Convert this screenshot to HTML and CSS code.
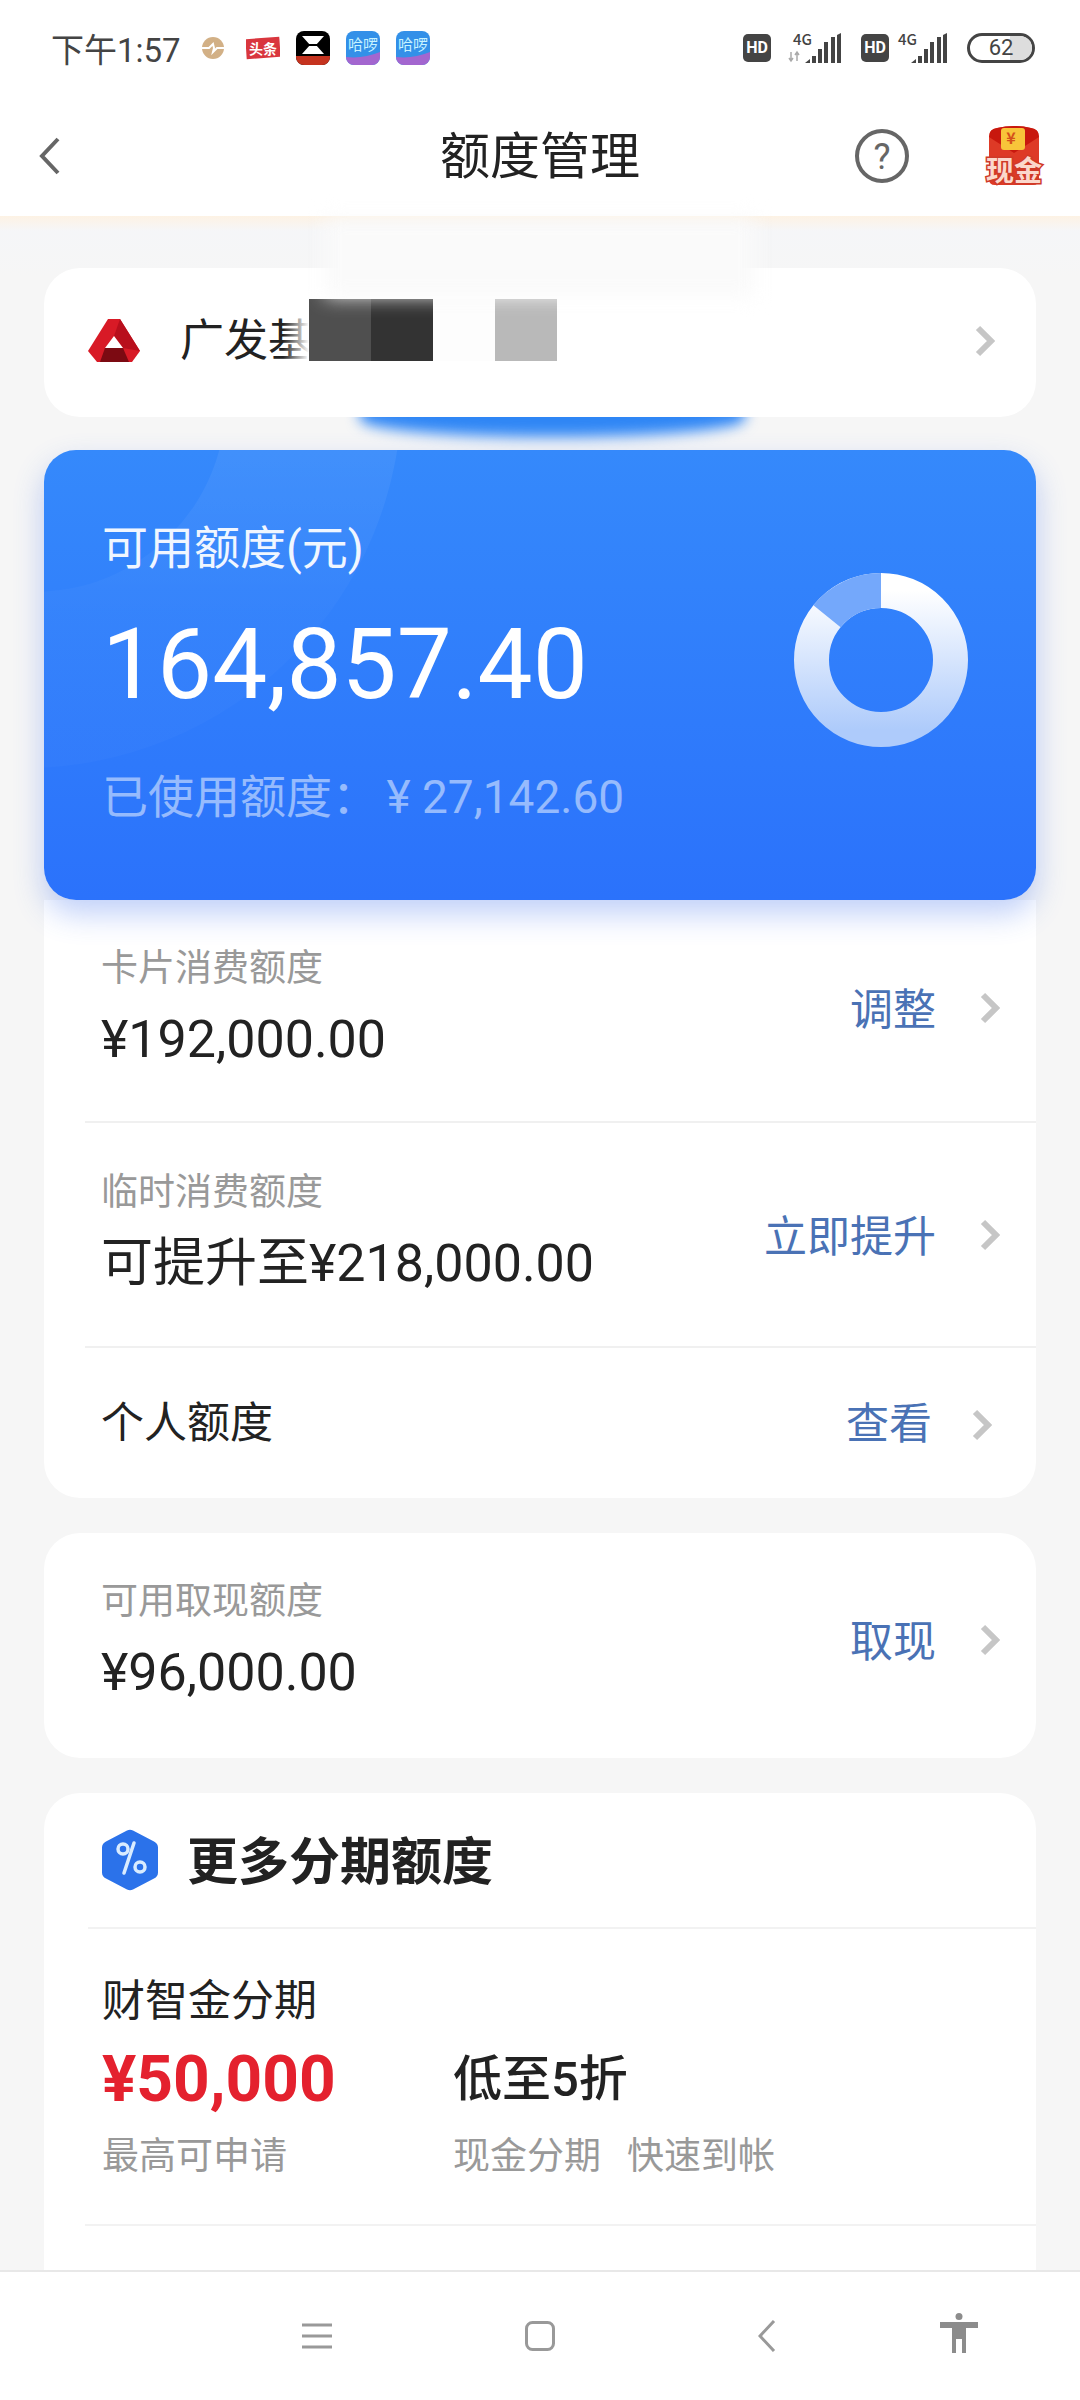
FILE: index.html

```html
<!DOCTYPE html>
<html>
<head>
  <meta charset="utf-8">
  <title>额度管理</title>
  <link rel="stylesheet" href="styles.css">
</head>
<body>
  <div class="screen">
    <div class="status-bar">
      <div class="status-left">
        <span class="time">下午1:57</span>
        <svg class="app-icon coin-icon" viewBox="0 0 34 34"><circle cx="17" cy="17" r="11" fill="#d2b086"/><path d="M6 17h7l4-4 1 4-1 4 4-4h7" stroke="#fff" stroke-width="2" fill="none"/></svg>
        <svg class="app-icon" viewBox="0 0 34 34"><rect x="0" y="7" width="34" height="20" fill="#d9363e" transform="rotate(-4 17 17)"/><text class="tiny-text" x="17" y="23" font-size="14" font-weight="700" fill="#fff" text-anchor="middle">头条</text></svg>
        <svg class="app-icon" viewBox="0 0 34 34"><rect width="34" height="34" rx="8" fill="#000"/><path d="M0 25h34v1a8 8 0 0 1-8 8H8a8 8 0 0 1-8-8z" fill="#c5331f"/><path d="M6 5h22l-8 9 8 9H6l8-9z" fill="#fff"/><path d="M9 13h16v2H9z" fill="#000"/></svg>
        <svg class="app-icon" viewBox="0 0 34 34"><rect width="34" height="34" rx="8" fill="#3390e8"/><path d="M0 26q17 2 34-5v5a8 8 0 0 1-8 8H8a8 8 0 0 1-8-8z" fill="#a366cf"/><text class="tiny-text" x="17" y="19" font-size="15" fill="#c8f3ff" text-anchor="middle">哈啰</text></svg>
        <svg class="app-icon" viewBox="0 0 34 34"><rect width="34" height="34" rx="8" fill="#3390e8"/><path d="M0 26q17 2 34-5v5a8 8 0 0 1-8 8H8a8 8 0 0 1-8-8z" fill="#a366cf"/><text class="tiny-text" x="17" y="19" font-size="15" fill="#c8f3ff" text-anchor="middle">哈啰</text></svg>
      </div>
      <div class="status-right">
        <span class="hd">HD</span>
        <svg class="signal signal-a" width="57" height="32" viewBox="0 0 57 32">
          <text class="tiny-text" x="5" y="13" font-size="15" font-weight="500" fill="#444">4G</text>
          <path d="M3 20v9M1 26l2 3 2-3M9 29v-9M7 23l2-3 2 3" stroke="#aaa" stroke-width="1.5" fill="none"/>
          <path d="M17 31l5-4v4zM24 24h4v7h-4zM30 17h4v14h-4zM36 10h4v21h-4zM43 5h4v26h-4zM53 1v30h-4V3z" fill="#444"/>
        </svg>
        <span class="hd">HD</span>
        <svg class="signal signal-b" width="53" height="32" viewBox="0 0 53 32">
          <text class="tiny-text" x="0" y="13" font-size="15" font-weight="500" fill="#444">4G</text>
          <path d="M13 31l5-4v4zM20 24h4v7h-4zM26 17h4v14h-4zM32 10h4v21h-4zM39 5h4v26h-4zM49 1v30h-4V3z" fill="#444"/>
        </svg>
        <span class="battery"><span class="battery-level"></span><span class="battery-num">62</span></span>
      </div>
    </div>

    <div class="top-bar">
      <svg class="back-icon" width="22" height="38" viewBox="0 0 22 38"><polyline points="19,2 3,19 19,36" fill="none" stroke="#666" stroke-width="4"/></svg>
      <div class="page-title">额度管理</div>
      <svg class="help-icon" width="56" height="56" viewBox="0 0 56 56">
        <circle cx="28" cy="28" r="25" fill="none" stroke="#666" stroke-width="4"/>
        <text class="help-mark" x="28" y="41" font-size="36" fill="#666" text-anchor="middle">?</text>
      </svg>
      <svg class="cash-icon" width="60" height="62" viewBox="0 0 60 62">
        <path d="M5 12q0-8 8-9 17-4 34-0 8 1 8 9v42q0 6-6 6H11q-6 0-6-6z" fill="#de3a26"/>
        <path d="M5 12q0-8 8-9 17-4 34-0 8 1 8 9L30 28z" fill="#c8180e"/>
        <rect x="17" y="3" width="24" height="22" rx="3" fill="#f8c53a"/>
        <text class="tiny-text" x="27" y="19" font-size="16" font-weight="700" fill="#d5501a" text-anchor="middle">¥</text>
        <text class="cash-text" x="30" y="56" font-size="28" font-weight="700" text-anchor="middle">现金</text>
      </svg>
    </div>

    <div class="content">
      <div class="top-smudge"></div>
      <div class="bank-card">
        <svg class="bank-logo" width="52" height="43" viewBox="0 0 52 43">
          <polygon points="20,0 32,0 52,32 44,43 9,43 0,32" fill="#d81a26"/>
          <polygon points="26,17 32,0 52,32 35,29" fill="#b80f1c"/>
          <polygon points="17,29 35,29 41,43 12,43" fill="#7c0a12"/>
          <polygon points="26,17 35,29 17,29" fill="#fff"/>
        </svg>
        <span class="bank-name">广发基</span>
        <div class="mosaic">
          <span class="mosaic-a"></span>
          <span class="mosaic-b"></span>
          <span class="mosaic-c"></span>
          <span class="mosaic-d"></span>
        </div>
        <svg class="chev bank-chev" width="20" height="32" viewBox="0 0 20 32"><polyline points="3,3 16,16 3,29"/></svg>
      </div>
      <div class="bank-glow"></div>

      <div class="quota-card">
        <svg class="quota-arcs" width="992" height="450" viewBox="0 0 992 450">
          <defs>
            <linearGradient id="arcFade" x1="0" y1="0" x2="0" y2="1">
              <stop offset="0" stop-color="#fff" stop-opacity="0.17"/>
              <stop offset="0.8" stop-color="#fff" stop-opacity="0.02"/>
            </linearGradient>
          </defs>
          <path fill="url(#arcFade)" fill-rule="evenodd" d="M-398 -60a378 378 0 1 0 756 0a378 378 0 1 0 -756 0zM-202 -50a192 192 0 1 0 384 0a192 192 0 1 0 -384 0z"/>
        </svg>
        <div class="quota-text">
          <div class="quota-label">可用额度(元)</div>
          <div class="quota-value">164,857.40</div>
          <div class="quota-used">已使用额度： <span class="used-num">¥ 27,142.60</span></div>
        </div>
        <svg class="quota-ring" width="174" height="174" viewBox="0 0 174 174">
          <defs>
            <linearGradient id="ringFill" x1="0" y1="0" x2="0" y2="1">
              <stop offset="0" stop-color="#fff"/>
              <stop offset="1" stop-color="#aecbfb"/>
            </linearGradient>
          </defs>
          <circle cx="87" cy="87" r="69.5" fill="none" stroke="url(#ringFill)" stroke-width="35"/>
          <path d="M87 17.5a69.5 69.5 0 0 0-54 25.7" fill="none" stroke="#74a8fb" stroke-width="35"/>
        </svg>
      </div>

      <div class="list-card attached">
        <div class="row row-first">
          <div class="row-body">
            <div class="row-label">卡片消费额度</div>
            <div class="row-value">¥192,000.00</div>
          </div>
          <div class="row-action lift">
            <span>调整</span>
            <svg class="chev" width="20" height="32" viewBox="0 0 20 32"><polyline points="3,3 16,16 3,29"/></svg>
          </div>
        </div>
        <div class="row row-second">
          <div class="row-body">
            <div class="row-label">临时消费额度</div>
            <div class="row-value">可提升至¥218,000.00</div>
          </div>
          <div class="row-action">
            <span>立即提升</span>
            <svg class="chev" width="20" height="32" viewBox="0 0 20 32"><polyline points="3,3 16,16 3,29"/></svg>
          </div>
        </div>
        <div class="row row-last">
          <div class="row-title">个人额度</div>
          <div class="row-action row-action-alt">
            <span>查看</span>
            <svg class="chev" width="20" height="32" viewBox="0 0 20 32"><polyline points="3,3 16,16 3,29"/></svg>
          </div>
        </div>
      </div>

      <div class="list-card">
        <div class="row row-cash">
          <div class="row-body">
            <div class="row-label">可用取现额度</div>
            <div class="row-value">¥96,000.00</div>
          </div>
          <div class="row-action">
            <span>取现</span>
            <svg class="chev" width="20" height="32" viewBox="0 0 20 32"><polyline points="3,3 16,16 3,29"/></svg>
          </div>
        </div>
      </div>

      <div class="list-card more-card">
        <div class="more-head">
          <svg class="more-badge" width="56" height="62" viewBox="0 0 56 62">
            <path d="M25 1.5q3-1.500 6 0l21 11q4 2 4 6v25q0 4-4 6l-21 11q-3 1.500-6 0L4 49.500q-4-2-4-6v-25q0-4 4-6z" fill="#2b72ea"/>
            <circle cx="21" cy="20" r="5" fill="none" stroke="#d9ecff" stroke-width="3.500"/>
            <circle cx="38" cy="38" r="5" fill="none" stroke="#d9ecff" stroke-width="3.500"/>
            <path d="M32 14L22 44" stroke="#d9ecff" stroke-width="3.500" stroke-linecap="round"/>
          </svg>
          <span class="more-title">更多分期额度</span>
        </div>
        <div class="plan">
          <div class="plan-name">财智金分期</div>
          <div class="plan-grid">
            <div class="plan-amount">¥50,000</div>
            <div class="plan-rate">低至5折</div>
            <div class="plan-note">最高可申请</div>
            <div class="plan-note"><span class="note-gap">现金分期</span>快速到帐</div>
          </div>
        </div>
        <div class="plan-rest"></div>
      </div>
    </div>

    <div class="nav-bar">
      <svg class="nav-menu" width="30" height="26" viewBox="0 0 30 26"><path d="M0 2h30M0 13h30M0 24h30" stroke="#999" stroke-width="3"/></svg>
      <svg class="nav-home" width="30" height="30" viewBox="0 0 30 30"><rect x="1.500" y="1.500" width="27" height="27" rx="6" fill="none" stroke="#999" stroke-width="3"/></svg>
      <svg class="nav-back" width="18" height="32" viewBox="0 0 18 32"><polyline points="16,1 2,16 16,31" fill="none" stroke="#999" stroke-width="3"/></svg>
      <svg class="nav-person" width="38" height="40" viewBox="0 0 38 40"><circle cx="19" cy="3.500" r="3.500" fill="#8c8c8c"/><path d="M0 9h38v6H26v25h-4V26h-6v14h-4V15H0z" fill="#8c8c8c"/></svg>
    </div>
  </div>
</body>
</html>
```

FILE: styles.css

```css
* { box-sizing: border-box; }
body { margin: 0; font-family: Roboto, "Noto Sans CJK SC", sans-serif; color: #222; }
.screen { position: relative; width: 1080px; height: 2400px; overflow: hidden; background: #f6f6f6; }

/* status bar */
.status-bar { display: flex; justify-content: space-between; align-items: center; height: 96px; padding: 0 45px 0 51px; background: #fff; }
.status-left { display: flex; align-items: center; gap: 16px; }
.time { width: 127px; margin-right: 2px; font-size: 33px; color: #444; white-space: nowrap; }
.app-icon { width: 34px; height: 34px; }
.tiny-text { font-family: "Noto Sans CJK SC", Roboto, sans-serif; }
.status-right { display: flex; align-items: center; gap: 16px; }
.hd { width: 28px; height: 28px; border-radius: 5px; background: #444; color: #fff; font-size: 16px; font-weight: 700; line-height: 28px; text-align: center; }
.signal { overflow: visible; }
.signal-a { margin-left: 1px; }
.signal-b { margin-left: -7px; }
.battery { position: relative; width: 68px; height: 30px; border: 3px solid #444; border-radius: 15px; overflow: hidden; }
.battery-level { position: absolute; top: 0; bottom: 0; right: 0; width: 22px; background: #ddd; }
.battery-num { position: absolute; inset: 0; font-size: 22px; line-height: 24px; text-align: center; color: #444; }

/* title */
.top-bar { position: relative; display: flex; align-items: center; height: 120px; background: #fff; }
.back-icon { margin-left: 39px; }
.page-title { position: absolute; left: 0; right: 0; top: 32px; font-size: 50px; line-height: 58px; text-align: center; color: #222; }
.help-icon { margin-left: 793px; }
.help-mark { font-family: Roboto, sans-serif; font-weight: 400; }
.cash-icon { margin-left: 74px; overflow: visible; }
.cash-text { font-family: "Noto Sans CJK SC", sans-serif; fill: #fbd8cc; stroke: #cf3a28; stroke-width: 3; paint-order: stroke; }

/* content */
.content { position: relative; padding: 52px 44px 0; background: linear-gradient(#fdf2e4, #f5f6f8 15px, #f6f6f6 60px); }
.top-smudge { position: absolute; z-index: 2; left: 325px; top: 2px; width: 430px; height: 78px; background: #fafafa; filter: blur(10px); }
.bank-card { position: relative; z-index: 1; display: flex; align-items: center; height: 149px; padding: 0 41px 4px 44px; background: #fff; border-radius: 36px; }
.bank-name { margin-left: 40px; width: 132px; font-size: 44px; line-height: 60px; white-space: nowrap; color: #222; }
.mosaic { position: relative; z-index: 3; display: flex; align-self: flex-start; margin: 31px 0 0 -3px; }
.mosaic::before { content: ""; position: absolute; left: -26px; top: 0; bottom: 0; width: 26px; background: linear-gradient(90deg, rgba(255,255,255,0), #fff); }
.mosaic span { width: 62px; height: 62px; }
.mosaic-a { background: #4f4f4f; }
.mosaic-b { background: #333; }
.mosaic-c { background: #fdfdfd; }
.mosaic-d { background: #b9b9b9; }
.bank-chev { margin-left: auto; }
.bank-glow { position: absolute; left: 360px; top: 185px; width: 385px; height: 36px; border-radius: 0 0 50% 50%; background: #2f86f5; filter: blur(7px); }
.chev { flex: none; }
.chev polyline { fill: none; stroke: #c6c6c6; stroke-width: 6; }

.quota-card { position: relative; z-index: 1; display: flex; justify-content: space-between; align-items: center; height: 450px; margin-top: 33px; padding: 0 68px 0 58px; color: #fff; border-radius: 32px; overflow: hidden; background: linear-gradient(#3589fb, #2b72fb); box-shadow: 0 14px 30px rgba(60,110,235,0.32); }
.quota-arcs { position: absolute; left: 0; top: 0; }
.quota-text { position: relative; align-self: flex-start; padding-top: 68px; }
.quota-label { font-size: 46px; line-height: 60px; color: #f0f6ff; white-space: nowrap; }
.quota-value { font-size: 98px; line-height: 110px; margin-top: 32px; white-space: nowrap; }
.quota-used { font-size: 46px; line-height: 60px; margin-top: 47px; color: rgba(255,255,255,0.5); white-space: pre; }
.used-num { margin-left: -3px; }
.quota-ring { position: relative; margin-bottom: 30px; }

.list-card { background: #fff; border-radius: 36px; margin-top: 35px; overflow: hidden; }
.list-card.attached { margin-top: 0; border-radius: 0 0 36px 36px; }
.row { display: flex; justify-content: space-between; align-items: center; margin-left: 41px; padding: 0 36px 0 16px; border-bottom: 2px solid #f0f0f0; }
.row-first { height: 223px; }
.row-second { height: 225px; }
.row-last { height: 150px; border-bottom: none; }
.row-cash { height: 225px; border-bottom: none; }
.row-body { margin-bottom: 8px; }
.row-cash .row-body { margin-bottom: 12px; }
.row-label { font-size: 37px; line-height: 50px; color: #999; white-space: nowrap; }
.row-value { font-size: 52px; line-height: 60px; margin-top: 16px; color: #222; white-space: nowrap; }
.row-title { font-size: 43px; line-height: 60px; color: #222; }
.row-action { display: flex; align-items: center; gap: 44px; font-size: 43px; line-height: 56px; color: #4a72b5; }
.row-action span { position: relative; top: 2px; }
.row-action-alt { gap: 40px; margin-right: 8px; margin-top: 4px; }
.row-action-alt span { top: -1px; }
.row-cash .row-action { margin-bottom: 12px; }
.lift { margin-bottom: 6px; }

.more-head { display: flex; align-items: center; gap: 29px; height: 136px; margin-left: 44px; padding-left: 14px; border-bottom: 2px solid #f2f2f2; }
.more-title { position: relative; top: -2px; font-size: 51px; font-weight: 700; color: #222; }
.plan { margin-left: 41px; padding: 44px 0 42px 17px; border-bottom: 2px solid #f2f2f2; }
.plan-name { font-size: 43px; line-height: 56px; color: #222; }
.plan-grid { display: grid; grid-template-columns: 351px auto; grid-row-gap: 17px; margin-top: 16px; }
.plan-amount { font-size: 64px; font-weight: 700; line-height: 70px; color: #e4212e; }
.plan-rate { font-size: 49px; font-weight: 500; line-height: 70px; color: #222; }
.plan-note { font-size: 37px; line-height: 50px; color: #999; white-space: nowrap; }
.note-gap { margin-right: 26px; }
.plan-rest { height: 160px; }

/* nav */
.nav-bar { position: absolute; left: 0; right: 0; bottom: 0; display: flex; align-items: center; height: 130px; padding-left: 302px; background: #fff; border-top: 2px solid #e8e8e8; }
.nav-home { margin-left: 193px; }
.nav-back { margin-left: 203px; }
.nav-person { margin-left: 164px; margin-bottom: 6px; }
```
